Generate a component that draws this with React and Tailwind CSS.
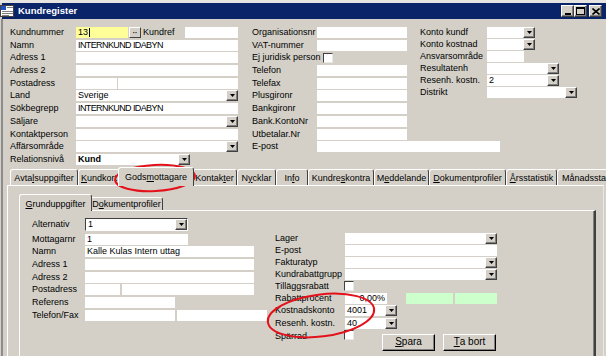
import React from "react";

function Accel({ text, at }) {
  if (at == null) return text;
  return (
    <>
      {text.slice(0, at)}
      <span className="underline underline-offset-1">{text[at]}</span>
      {text.slice(at + 1)}
    </>
  );
}

function DropBtn() {
  return (
    <div className="flex h-full w-[12px] shrink-0 items-center justify-center border border-t-white border-l-white border-r-[#404040] border-b-[#404040] bg-[#d4d0c8] shadow-[inset_-1px_-1px_0_#808080]">
      <svg width="5" height="3" viewBox="0 0 5 3">
        <path d="M0 0h5L2.5 3z" fill="#000" />
      </svg>
    </div>
  );
}

function Field({ className = "", children }) {
  return (
    <div className={`flex h-[11px] shrink-0 items-center overflow-hidden whitespace-nowrap bg-white px-[2px] leading-none ${className}`}>
      {children}
    </div>
  );
}

function Combo({ className = "", children, sunken }) {
  return (
    <div
      className={`flex shrink-0 items-stretch bg-white ${
        sunken
          ? "h-[13px] border border-t-[#404040] border-l-[#404040] border-r-white border-b-white"
          : "h-[11px]"
      } ${className}`}
    >
      <span className="flex flex-1 items-center overflow-hidden whitespace-nowrap px-[2px] leading-none">
        {children}
      </span>
      <DropBtn />
    </div>
  );
}

function Check() {
  return (
    <div className="h-[10px] w-[10px] shrink-0 border border-t-[#404040] border-l-[#404040] border-r-[#e8e8e8] border-b-[#e8e8e8] bg-white" />
  );
}

function Row({ label, lw, h = "h-[12.7px]", children }) {
  return (
    <div className={`flex shrink-0 items-start ${h}`}>
      <span className={`shrink-0 whitespace-nowrap leading-[11px] ${lw}`}>{label}</span>
      {children}
    </div>
  );
}

function Tab({ label, at, w, active, small }) {
  if (active) {
    return (
      <div
        className={`relative z-10 -mx-[2px] mb-[-1px] flex shrink-0 justify-center whitespace-nowrap rounded-t-[3px] border-t border-l border-r border-t-white border-l-white border-r-[#404040] bg-[#d4d0c8] leading-[11px] ${
          small ? "h-[17px] pt-[4px]" : "h-[19px] pt-[4px]"
        } ${w}`}
      >
        <Accel text={label} at={at} />
      </div>
    );
  }
  return (
    <div
      className={`flex shrink-0 justify-center whitespace-nowrap rounded-t-[3px] border-t border-l border-r border-t-white border-l-white border-r-[#404040] leading-[11px] ${
        small ? "h-[13px] pt-[1px]" : "h-[16px] pt-[3px]"
      } ${w}`}
    >
      <Accel text={label} at={at} />
    </div>
  );
}

function WinBtn({ children, className = "" }) {
  return (
    <div className={`flex h-[12px] w-[13px] items-center justify-center border border-t-white border-l-white border-r-[#404040] border-b-[#404040] bg-[#d4d0c8] shadow-[inset_-1px_-1px_0_#808080] ${className}`}>
      {children}
    </div>
  );
}

function Button({ label, at }) {
  return (
    <div className="flex h-[17px] w-[53px] items-center justify-center border border-t-white border-l-white border-r-black border-b-black bg-[#d4d0c8] text-[10px] leading-none shadow-[inset_-1px_-1px_0_#808080]">
      <Accel text={label} at={at} />
    </div>
  );
}

function TitleBar() {
  return (
    <div className="ml-[2px] flex h-[16px] items-center bg-[#0a246a]">
      <svg width="15" height="14" viewBox="0 0 15 14" className="-ml-[2px] mr-[3px]">
        <rect x="0.5" y="1.5" width="13" height="11" fill="#ffffff" stroke="#404040" />
        <rect x="1" y="2" width="5" height="4" fill="#1c52c4" />
        <rect x="7" y="3" width="6" height="1" fill="#808080" />
        <rect x="2" y="7" width="11" height="1" fill="#808080" />
        <rect x="2" y="9" width="11" height="1" fill="#808080" />
        <rect x="2" y="11" width="7" height="1" fill="#808080" />
      </svg>
      <span className="text-[9.5px] font-bold leading-none text-white">Kundregister</span>
      <div className="ml-auto mr-[4px] flex items-center">
        <WinBtn>
          <div className="mt-[5px] h-[2px] w-[6px] bg-black" />
        </WinBtn>
        <WinBtn>
          <div className="h-[8px] w-[9px] border border-t-2 border-black" />
        </WinBtn>
        <WinBtn className="ml-[2px]">
          <svg width="8" height="7" viewBox="0 0 8 7">
            <path d="M0.5 0.5L7.5 6.5M7.5 0.5L0.5 6.5" stroke="#000" strokeWidth="1.6" />
          </svg>
        </WinBtn>
      </div>
    </div>
  );
}

function TopForm() {
  const caps = "tracking-[-0.6px]";
  return (
    <div className="flex pl-[7px] pt-[8px]">
      <div className="w-[242px] shrink-0">
        <Row label="Kundnummer" lw="w-[66px]">
          <div className="flex h-[11px] w-[52px] items-center bg-[#ffff99] px-[2px] leading-none">
            13<span className="ml-px h-[9px] w-px bg-black" />
          </div>
          <div className="ml-px flex h-[11px] w-[12px] items-center justify-center border border-t-white border-l-white border-r-[#404040] border-b-[#404040] bg-[#d4d0c8] text-[7px] font-bold leading-none">
            ··
          </div>
          <span className="ml-[2px] w-[42px] leading-[11px]">Kundref</span>
          <Field className="w-[53px]" />
        </Row>
        <Row label="Namn" lw="w-[66px]">
          <Field className={`w-[162px] ${caps}`}>INTERNKUND IDABYN</Field>
        </Row>
        <Row label="Adress 1" lw="w-[66px]">
          <Field className="w-[162px]" />
        </Row>
        <Row label="Adress 2" lw="w-[66px]">
          <Field className="w-[162px]" />
        </Row>
        <Row label="Postadress" lw="w-[66px]">
          <Field className="w-[41px]" />
          <Field className="ml-px w-[120px]" />
        </Row>
        <Row label="Land" lw="w-[66px]">
          <Combo className="w-[162px]">Sverige</Combo>
        </Row>
        <Row label="Sökbegrepp" lw="w-[66px]">
          <Field className={`w-[162px] ${caps}`}>INTERNKUND IDABYN</Field>
        </Row>
        <Row label="Säljare" lw="w-[66px]">
          <Combo className="w-[162px]" />
        </Row>
        <Row label="Kontaktperson" lw="w-[66px]">
          <Field className="w-[162px]" />
        </Row>
        <Row label="Affärsområde" lw="w-[66px]">
          <Combo className="w-[162px]" />
        </Row>
        <Row label="Relationsnivå" lw="w-[66px]">
          <Combo className="w-[114px] font-bold">Kund</Combo>
        </Row>
      </div>

      <div className="w-[168px] shrink-0">
        <Row label="Organisationsnr" lw="w-[65px]">
          <Field className="w-[90px]" />
        </Row>
        <Row label="VAT-nummer" lw="w-[65px]">
          <Field className="w-[90px]" />
        </Row>
        <Row label="Ej juridisk person" lw="w-auto">
          <div className="ml-[2px] mt-px">
            <Check />
          </div>
        </Row>
        <Row label="Telefon" lw="w-[65px]">
          <Field className="w-[90px]" />
        </Row>
        <Row label="Telefax" lw="w-[65px]">
          <Field className="w-[90px]" />
        </Row>
        <Row label="Plusgironr" lw="w-[65px]">
          <Field className="w-[90px]" />
        </Row>
        <Row label="Bankgironr" lw="w-[65px]">
          <Field className="w-[90px]" />
        </Row>
        <Row label="Bank.KontoNr" lw="w-[65px]">
          <Field className="w-[90px]" />
        </Row>
        <Row label="Utbetalar.Nr" lw="w-[65px]">
          <Field className="w-[90px]" />
        </Row>
        <Row label="E-post" lw="w-[65px]">
          <Field className="w-[183px]" />
        </Row>
      </div>

      <div className="shrink-0">
        <Row label="Konto kundf" lw="w-[67px]" h="h-[12px]">
          <Combo className="w-[48px]" />
        </Row>
        <Row label="Konto kostnad" lw="w-[67px]" h="h-[12px]">
          <Combo className="w-[48px]" />
        </Row>
        <Row label="Ansvarsområde" lw="w-[67px]" h="h-[12px]">
          <Field className="w-[37px]" />
        </Row>
        <Row label="Resultatenh" lw="w-[67px]" h="h-[12px]">
          <Combo className="w-[72px]" />
        </Row>
        <Row label="Resenh. kostn." lw="w-[67px]" h="h-[12px]">
          <Combo className="w-[72px]">2</Combo>
        </Row>
        <Row label="Distrikt" lw="w-[67px]" h="h-[12px]">
          <Combo className="w-[90px]" />
        </Row>
      </div>
    </div>
  );
}

function Godsmottagare() {
  return (
    <div className="flex h-[200px] w-[577px] border-t border-l border-t-white border-l-white border-r-2 border-r-[#404040] pl-[12px] pt-[7px] shadow-[inset_-1px_0_0_#808080]">
      <div className="w-[243px] shrink-0">
        <div className="flex h-[16px] items-start">
          <span className="w-[53px] shrink-0 leading-[13px]">Alternativ</span>
          <Combo sunken className="w-[103px]">1</Combo>
        </div>
        <Row label="Mottagarnr" lw="w-[53px]">
          <Field className="w-[103px]">1</Field>
        </Row>
        <Row label="Namn" lw="w-[53px]">
          <Field className="w-[169px]">Kalle Kulas Intern uttag</Field>
        </Row>
        <Row label="Adress 1" lw="w-[53px]">
          <Field className="w-[169px]" />
        </Row>
        <Row label="Adress 2" lw="w-[53px]">
          <Field className="w-[169px]" />
        </Row>
        <Row label="Postadress" lw="w-[53px]">
          <Field className="w-[35px]" />
          <Field className="ml-[2px] w-[132px]" />
        </Row>
        <Row label="Referens" lw="w-[53px]">
          <Field className="w-[90px]" />
        </Row>
        <Row label="Telefon/Fax" lw="w-[53px]">
          <Field className="w-[90px]" />
          <Field className="ml-[2px] w-[90px]" />
        </Row>
      </div>

      <div className="shrink-0 pt-[15px]">
        <Row label="Lager" lw="w-[70px]" h="h-[12.1px]">
          <Combo className="w-[152px]" />
        </Row>
        <Row label="E-post" lw="w-[70px]" h="h-[12.1px]">
          <Field className="w-[152px]" />
        </Row>
        <Row label="Fakturatyp" lw="w-[70px]" h="h-[12.1px]">
          <Combo className="w-[152px]" />
        </Row>
        <Row label="Kundrabattgrupp" lw="w-[70px]" h="h-[12.1px]">
          <Combo className="w-[152px]" />
        </Row>
        <Row label="Tilläggsrabatt" lw="w-[69px]" h="h-[12.1px]">
          <Check />
        </Row>
        <Row label="Rabattprocent" lw="w-[70px]" h="h-[12.1px]">
          <Field className="w-[42px] justify-end">0,00%</Field>
          <div className="ml-[19px] h-[11px] w-[47px] bg-[#ccffcc]" />
          <div className="ml-[2px] h-[11px] w-[42px] bg-[#ccffcc]" />
        </Row>
        <Row label="Kostnadskonto" lw="w-[70px]" h="h-[12.6px]">
          <Combo className="w-[52px]">4001</Combo>
        </Row>
        <Row label="Resenh. kostn." lw="w-[70px]" h="h-[12.1px]">
          <Combo className="w-[52px]">40</Combo>
        </Row>
        <div className="flex items-start">
          <span className="mt-[1px] w-[69px] shrink-0 leading-[11px]">Spärrad</span>
          <Check />
          <div className="ml-[28px] mt-[4px] flex gap-[8px]">
            <Button label="Spara" at={0} />
            <Button label="Ta bort" at={0} />
          </div>
        </div>
      </div>
    </div>
  );
}

function Tabs() {
  return (
    <div className="ml-[4px]">
      <div className="flex h-[18px] items-end pl-[3px]">
        <Tab label="Avtalsuppgifter" at={4} w="w-[68px]" />
        <Tab label="Kundkort" at={0} w="w-[42px]" />
        <Tab label="Godsmottagare" at={4} w="w-[76px]" active />
        <Tab label="Kontakter" at={6} w="w-[45px]" />
        <Tab label="Nycklar" at={1} w="w-[39px]" />
        <Tab label="Info" at={2} w="w-[32px]" />
        <Tab label="Kundreskontra" at={6} w="w-[66px]" />
        <Tab label="Meddelande" at={1} w="w-[55px]" />
        <Tab label="Dokumentprofiler" at={0} w="w-[77px]" />
        <Tab label="Årsstatistik" at={0} w="w-[51px]" />
        <Tab label="Månadsstatistik" w="w-[72px]" />
      </div>
      <div className="h-[200px] w-[597px] border-t border-l border-r border-t-white border-l-white border-r-[#e8e8e8] pl-[11px] pt-[8px]">
        <div className="flex h-[16px] items-end pl-[2px]">
          <Tab label="Grunduppgifter" at={0} w="w-[73px]" active small />
          <Tab label="Dokumentprofiler" at={1} w="w-[73px]" small />
        </div>
        <Godsmottagare />
      </div>
    </div>
  );
}

export default function App() {
  return (
    <div className="relative h-[356px] w-[606px] overflow-hidden bg-[#d4d0c8] font-['Liberation_Sans',Arial,sans-serif] text-[9px] text-black">
      <div className="h-[3px] bg-[#e6e4e0]" />
      <TitleBar />
      <div className="ml-px h-full border-l-2 border-l-[#8c8c8c]">
        <TopForm />
        <Tabs />
      </div>
      <svg
        className="pointer-events-none absolute left-0 top-0"
        width="606"
        height="356"
        viewBox="0 0 606 356"
      >
        <ellipse cx="155" cy="178" rx="40" ry="13" fill="none" stroke="#e4101a" strokeWidth="2" transform="rotate(-3 155 178)" />
        <ellipse cx="321" cy="315.5" rx="53.5" ry="21" fill="none" stroke="#e4101a" strokeWidth="2" transform="rotate(-7 321 315.5)" />
      </svg>
    </div>
  );
}
